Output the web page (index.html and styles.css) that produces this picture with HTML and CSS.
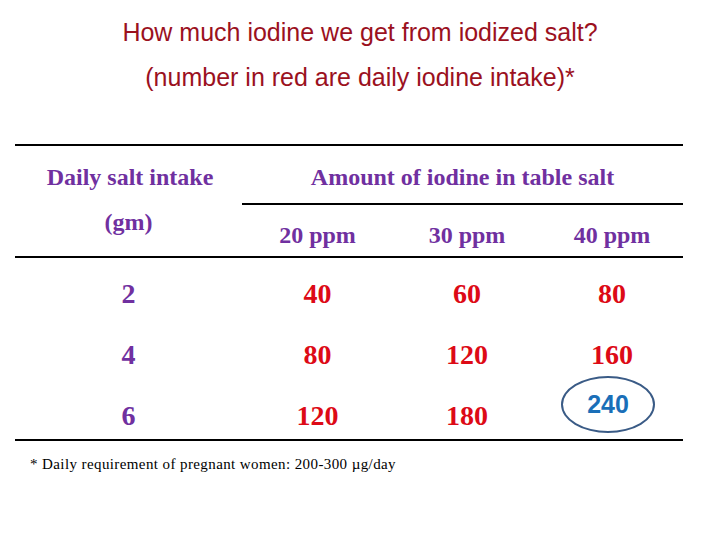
FILE: index.html
```html
<!DOCTYPE html>
<html>
<head>
<meta charset="utf-8">
<link rel="stylesheet" href="styles.css">
</head>
<body>
<div class="slide">
  <div class="title">
    <div class="t1">How much iodine we get from iodized salt?</div>
    <div class="t2">(number in red are daily iodine intake)*</div>
  </div>
  <div class="tbl">
    <div class="head">
      <div class="hleft">
        <div class="hl1">Daily salt intake</div>
        <div class="hl2">(gm)</div>
      </div>
      <div class="hright">
        <div class="amount">Amount of iodine in table salt</div>
        <div class="ppms">
          <div>20 ppm</div>
          <div>30 ppm</div>
          <div>40 ppm</div>
        </div>
      </div>
    </div>
    <div class="body">
      <div class="row">
        <div class="salt">2</div><div class="val">40</div><div class="val">60</div><div class="val">80</div>
      </div>
      <div class="row">
        <div class="salt">4</div><div class="val">80</div><div class="val">120</div><div class="val">160</div>
      </div>
      <div class="row last">
        <div class="salt">6</div><div class="val">120</div><div class="val">180</div><div class="val"><span class="ring">240</span></div>
      </div>
    </div>
  </div>
  <div class="foot">* Daily requirement of pregnant women: 200-300 µg/day</div>
</div>
</body>
</html>
```
FILE: styles.css
```css
html, body {
  margin: 0;
  padding: 0;
  background: #ffffff;
}
.slide {
  width: 720px;
  height: 540px;
  overflow: hidden;
  padding-top: 10px;
  box-sizing: border-box;
}
.title {
  font-family: "Liberation Sans", Arial, sans-serif;
  font-size: 25px;
  line-height: 45px;
  color: #9b111e;
  text-align: center;
}
.tbl {
  margin: 44px 0 0 15px;
  width: 668px;
  border-top: 2px solid #000;
  border-bottom: 2px solid #000;
  font-family: "Liberation Serif", "Times New Roman", serif;
  font-weight: bold;
}
.head {
  display: grid;
  grid-template-columns: 227px 441px;
  border-bottom: 2px solid #000;
  color: #7030a0;
  font-size: 24px;
  line-height: 30px;
  text-align: center;
}
.hleft {
  padding-top: 16px;
}
.hl1 {
  padding-left: 3px;
}
.hl2 {
  margin-top: 15px;
}
.hright {
  padding-top: 16px;
}
.amount {
  padding-bottom: 11px;
  border-bottom: 2px solid #000;
}
.ppms {
  display: grid;
  grid-template-columns: 151px 148px 142px;
  padding-top: 15px;
  padding-bottom: 6px;
}
.body {
  padding-top: 5px;
}
.row {
  display: grid;
  grid-template-columns: 227px 151px 148px 142px;
  height: 61px;
  line-height: 61px;
  font-size: 28px;
  text-align: center;
}
.row.last {
  height: 54px;
}
.salt {
  color: #7030a0;
}
.val {
  color: #dd0a16;
}
.ring {
  display: inline-flex;
  align-items: center;
  justify-content: center;
  vertical-align: top;
  margin-top: -9px;
  margin-right: 8px;
  width: 90px;
  height: 53px;
  border: 2.5px solid #3a5b86;
  border-radius: 50%;
  font-family: "Liberation Sans", Arial, sans-serif;
  font-weight: bold;
  font-size: 25px;
  line-height: 1;
  color: #1a6fb8;
}
.foot {
  margin: 14px 0 0 30px;
  font-family: "Liberation Serif", "Times New Roman", serif;
  font-size: 15px;
  line-height: 18px;
  letter-spacing: 0.4px;
  color: #000;
}
```
